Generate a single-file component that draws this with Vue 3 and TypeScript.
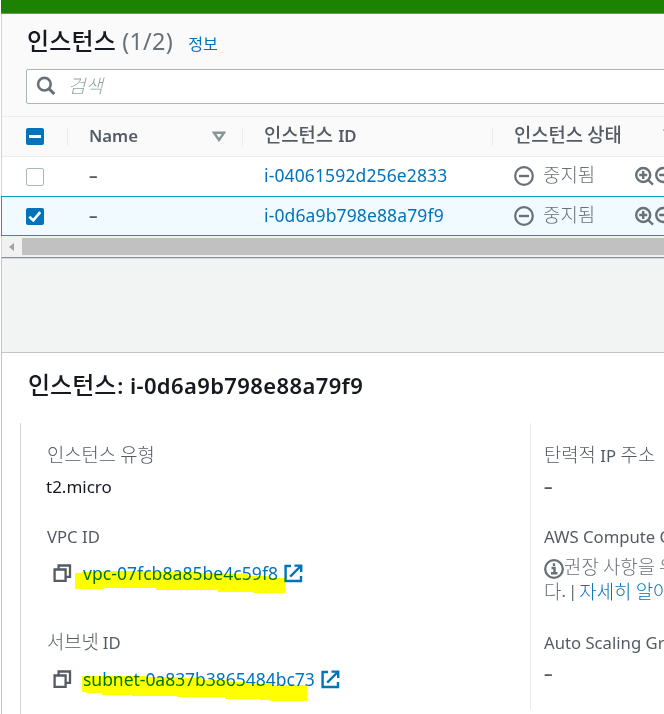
<script setup lang="ts">
interface Instance {
  id: string
  selected: boolean
}

const instances: Instance[] = [
  { id: 'i-04061592d256e2833', selected: false },
  { id: 'i-0d6a9b798e88a79f9', selected: true },
]
</script>

<template>
  <div class="page">
    <div class="banner"></div>

    <section class="list">
      <header class="title">
        <h1 class="ko">인스턴스</h1>
        <span class="count">(1/2)</span>
        <a class="info">정보</a>
      </header>
      <div class="search">
        <svg width="20" height="20" viewBox="0 0 20 20" fill="none" stroke="#687078">
          <circle cx="8.4" cy="8.2" r="6.3" stroke-width="2.6" />
          <path d="M12.8 12.6L18.3 18" stroke-width="3" />
        </svg>
        <span class="placeholder">검색</span>
      </div>

      <div class="row head">
        <div class="cell pick">
          <span class="box on"><i class="dash"></i></span>
        </div>
        <div class="cell name">
          <span class="th">Name</span>
          <svg class="sort" width="14" height="11" viewBox="0 0 14 11">
            <path d="M2 1.7H12L7 9Z" fill="none" stroke="#879596" stroke-width="2.4" />
          </svg>
        </div>
        <div class="cell id"><span class="ko hk">인스턴스</span><span class="th idword">ID</span></div>
        <div class="cell state">
          <span class="ko hk">인스턴스 상태</span>
          <svg class="sort next" width="14" height="11" viewBox="0 0 14 11">
            <path d="M2 1.7H12L7 9Z" fill="none" stroke="#879596" stroke-width="2.4" />
          </svg>
        </div>
      </div>

      <div v-for="item in instances" :key="item.id" class="row" :class="{ selected: item.selected }">
        <div class="cell pick">
          <span class="box" :class="{ on: item.selected }">
            <svg v-if="item.selected" width="18" height="17" viewBox="0 0 18 17">
              <path d="M3.3 8.8L7.3 12.4L14.2 4.2" fill="none" stroke="#fff" stroke-width="2.7" />
            </svg>
          </span>
        </div>
        <div class="cell name"><span class="none">–</span></div>
        <div class="cell id"><a class="link iid">{{ item.id }}</a></div>
        <div class="cell state">
          <svg class="stopped" width="20" height="20" viewBox="0 0 20 20" fill="none" stroke="#687078">
            <circle cx="10" cy="10" r="8.8" stroke-width="2.2" />
            <path d="M5 10H15" stroke-width="2.4" />
          </svg>
          <span class="ko status">중지됨</span>
          <svg class="zoom" width="42" height="20" viewBox="0 0 42 20" fill="none" stroke="#687078" stroke-width="2.4">
            <circle cx="8.2" cy="9" r="7" />
            <path d="M4.2 9H12.2M8.2 5V13M13.2 14L18 18.6" />
            <circle cx="28.2" cy="9" r="7" />
            <path d="M24.2 9H32.2M33.2 14L38 18.6" />
          </svg>
        </div>
      </div>

      <div class="scroll">
        <svg width="5" height="8" viewBox="0 0 5 8"><path d="M5 0V8L0 4Z" fill="#a3a3a3" /></svg>
        <div class="thumb"></div>
      </div>
    </section>

    <div class="gap"></div>

    <section class="detail">
      <h2><span class="ko">인스턴스</span><span class="iname">: i-0d6a9b798e88a79f9</span></h2>
      <div class="columns">
        <div class="col left">
          <div class="field first">
            <div class="label ko">인스턴스 유형</div>
            <div class="value type">t2.micro</div>
          </div>
          <div class="field second">
            <div class="label vpc">VPC ID</div>
            <div class="value resource">
              <svg class="copy" width="19" height="19" viewBox="0 0 19 19" fill="none" stroke="#545b64" stroke-width="2.3">
                <path d="M1.6 5.5H12.6V16.8H1.6Z" />
                <path d="M5.6 5V1.5H17V12.8H13" />
              </svg>
              <a class="link vpcid">vpc-07fcb8a85be4c59f8</a>
              <svg class="out" width="19" height="19" viewBox="0 0 19 19" fill="none" stroke="#0073bb" stroke-width="2.4">
                <path d="M7 2H1.6V17H17V12M10.5 1.6H17.2V8M16.8 2L6.2 12.6" />
              </svg>
              <svg class="marker" width="211" height="24" viewBox="0 0 211 24">
                <path d="M1 3H8V2H29V1H70V2H125V3H150V4H174V6H195V8H211V23H179V22H144V20H82V18H30V19H1Z" fill="#ff0" />
              </svg>
            </div>
          </div>
          <div class="field third">
            <div class="label"><span class="ko">서브넷</span><span class="word">ID</span></div>
            <div class="value resource">
              <svg class="copy" width="19" height="19" viewBox="0 0 19 19" fill="none" stroke="#545b64" stroke-width="2.3">
                <path d="M1.6 5.5H12.6V16.8H1.6Z" />
                <path d="M5.6 5V1.5H17V12.8H13" />
              </svg>
              <a class="link subid">subnet-0a837b3865484bc73</a>
              <svg class="out" width="19" height="19" viewBox="0 0 19 19" fill="none" stroke="#0073bb" stroke-width="2.4">
                <path d="M7 2H1.6V17H17V12M10.5 1.6H17.2V8M16.8 2L6.2 12.6" />
              </svg>
              <svg class="marker sub" width="226" height="27" viewBox="0 0 226 27">
                <path d="M0 1H64V2H98V3H120V5H145V7H164V9H190V10H225V26H188V25H178V24H143V22H95V21H50V20H20V18H4V17H0Z" fill="#ff0" />
              </svg>
            </div>
          </div>
        </div>
        <div class="col right">
          <div class="field first">
            <div class="label"><span class="ko">탄력적</span><span class="word">IP</span><span class="ko word">주소</span></div>
            <div class="value none">–</div>
          </div>
          <div class="field second">
            <div class="label aws">AWS Compute Optimizer</div>
            <div class="advice">
              <svg width="20" height="20" viewBox="0 0 20 20" fill="none" stroke="#687078">
                <circle cx="10" cy="10" r="8.8" stroke-width="2.3" />
                <path d="M10 4.3V7M7.5 9H10.5V14M7 14.2H13.5" stroke-width="2.4" />
              </svg>
              <span class="ko">권장 사항을 위해</span>
            </div>
            <div class="advice more"><span class="ko">다</span><span>.</span><span class="bar">|</span><a class="ko">자세히 알아보기</a></div>
          </div>
          <div class="field third">
            <div class="label asg">Auto Scaling Group</div>
            <div class="value none">–</div>
          </div>
        </div>
      </div>
    </section>
  </div>
</template>

<style>
body {
  background: #fff;
  overflow: hidden;
}
</style>

<style scoped>
* {
  box-sizing: border-box;
}
.page {
  width: 664px;
  height: 714px;
  overflow: hidden;
  padding-left: 1px;
  background: #fff;
  color: #16191f;
  font-family: "Noto Sans", "Noto Sans CJK KR", sans-serif;
  font-size: 17px;
  white-space: nowrap;
  display: flex;
  flex-direction: column;
}
.ko {
  font-family: "Noto Sans CJK KR", sans-serif;
}
.banner {
  height: 14px;
  background: #1d8102;
  border-bottom: 1px solid #70906b;
  flex: none;
}
.list {
  height: 244px;
  flex: none;
  background: #fafafa;
  border-left: 1px solid #d0d6d6;
  border-bottom: 1px solid #879196;
}
.title {
  display: flex;
  height: 55px;
  padding-left: 25px;
  line-height: 52px;
}
h1 {
  margin: 0;
  font-size: 24px;
  font-weight: 500;
  letter-spacing: 0.2px;
}
.count {
  margin-left: 6px;
  font-size: 23.4px;
  line-height: 55px;
  letter-spacing: 0.3px;
  color: #687078;
}
.info {
  margin-left: 15px;
  font-family: "Noto Sans CJK KR", sans-serif;
  font-size: 16.2px;
  line-height: 58px;
  color: #0073bb;
}
.search {
  height: 35px;
  margin-left: 24px;
  margin-right: -4px;
  padding: 0 0 2px 9px;
  display: flex;
  align-items: center;
  border: 1px solid #aab7b8;
  border-radius: 2px;
  background: #fff;
}
.placeholder {
  margin-left: 12px;
  padding-bottom: 2px;
  font-family: "Noto Sans CJK KR", sans-serif;
  font-size: 19px;
  font-style: italic;
  font-weight: 300;
  line-height: 28px;
  color: #95a5a6;
}
.row {
  height: 40px;
  display: flex;
  align-items: center;
  background: #fff;
}
.head {
  height: 41px;
  margin-top: 12px;
  background: #fafafa;
  border-top: 1px solid #eaeded;
  border-bottom: 1px solid #eaeded;
}
.selected {
  margin-top: -1px;
  margin-left: -1px;
  padding-top: 1px;
  position: relative;
  background: #f1faff;
  border: 1px solid #00a1c9;
  border-right: 0;
}
.cell {
  display: flex;
  align-items: center;
  flex: none;
}
.pick {
  width: 65px;
  padding-left: 24px;
}
.name {
  width: 175px;
  padding-left: 22px;
}
.id {
  width: 250px;
  padding-left: 22px;
}
.state {
  width: 180px;
  padding-left: 22px;
}
.head .cell {
  height: 19px;
}
.head .name,
.head .id,
.head .state {
  border-left: 1px solid #eaeded;
  padding-left: 21px;
}
.box {
  width: 18px;
  height: 18px;
  border: 1px solid #aab7b8;
  border-radius: 2px;
  background: #fff;
  display: flex;
  align-items: center;
  justify-content: center;
  overflow: hidden;
}
.box.on {
  height: 17px;
  border: 0;
  background: #0073bb;
}
.dash {
  width: 12px;
  height: 3px;
  background: #fff;
}
.th {
  padding-bottom: 2px;
  font-size: 16.8px;
  font-weight: 600;
  color: #545b64;
}
.sort {
  margin-left: 74px;
}
.hk {
  padding-bottom: 6px;
  font-size: 18.8px;
  font-weight: 500;
  line-height: 20px;
  color: #545b64;
}
.idword {
  margin-left: 5px;
}
.sort.next {
  margin-left: 41px;
  margin-bottom: 4px;
  flex: none;
}
.name .none {
  width: 9px;
  padding-bottom: 3px;
}
.none {
  color: #545b64;
  font-weight: 600;
}
.link {
  color: #0073bb;
}
.iid {
  padding-bottom: 4px;
  font-size: 17.5px;
  letter-spacing: 0.13px;
}
.stopped,
.zoom {
  margin-bottom: 2px;
  flex: none;
}
.selected .stopped,
.selected .zoom {
  margin-bottom: 1px;
}
.status {
  margin-left: 9px;
  padding-bottom: 6px;
  font-size: 18.9px;
  font-weight: 300;
  line-height: 26px;
  color: #687078;
}
.selected .status {
  padding-bottom: 5px;
}
.zoom {
  margin-left: 40px;
}
.scroll {
  height: 21px;
  padding: 2px 0 2px 7px;
  display: flex;
  align-items: center;
  background: #f1f1f1;
}
.thumb {
  height: 17px;
  flex: 1;
  margin-left: 8px;
  background: #c1c1c1;
}
.gap {
  height: 94px;
  flex: none;
  border-top: 1px solid #d5d9da;
  border-left: 1px solid #c0c5c7;
  background: #f2f3f3;
}
.detail {
  flex: 1;
  border-top: 1px solid #bfc5c8;
  border-left: 1px solid #bfc5c8;
  background: #fff;
}
h2 {
  height: 70px;
  margin: 0;
  padding-left: 26px;
  display: flex;
  font-size: 22px;
  font-weight: 600;
  line-height: 65px;
}
h2 .ko {
  font-size: 24px;
  font-weight: 500;
  line-height: 62px;
}
.iname {
  margin-left: 1px;
  letter-spacing: 0.38px;
}
.columns {
  display: flex;
  padding-left: 18px;
}
.col {
  height: 291px;
  width: 510px;
  flex: none;
  padding-left: 26px;
  border-left: 1px solid #d0d6d6;
}
.col.right {
  height: 287px;
  padding-left: 13px;
  border-color: #eaeded;
}
.label {
  height: 28px;
  display: flex;
  font-size: 16.7px;
  line-height: 28px;
  color: #545b64;
}
.label .ko,
.label.ko {
  font-size: 18.8px;
  font-weight: 300;
  line-height: 24px;
}
.word {
  margin-left: 4px;
}
.right .word {
  margin-left: 4.5px;
}
.value {
  height: 34px;
  line-height: 34px;
}
.type {
  margin-left: -1px;
}
.field.first {
  height: 100px;
  padding-top: 19px;
}
.field.second {
  height: 106px;
}
.resource {
  position: relative;
  height: 44px;
  display: flex;
  align-items: center;
}
.copy {
  margin-left: 6px;
}
.vpcid,
.subid {
  margin-left: 11px;
  font-size: 17.5px;
}
.vpcid {
  letter-spacing: 0.06px;
}
.subid {
  letter-spacing: -0.03px;
}
.out {
  margin-left: 6px;
}
.marker {
  position: absolute;
  left: 27px;
  top: 19px;
  mix-blend-mode: multiply;
}
.marker.sub {
  left: 35px;
  top: 18px;
}
.advice {
  height: 29px;
  display: flex;
  align-items: center;
  font-size: 17px;
  color: #687078;
}
.advice svg {
  margin-top: 7px;
}
.advice .ko {
  font-size: 18.9px;
  font-weight: 300;
}
.advice a.ko {
  margin-left: 2px;
  color: #0073bb;
}
.more {
  height: 21px;
}
.bar {
  margin-left: 2px;
}
</style>
